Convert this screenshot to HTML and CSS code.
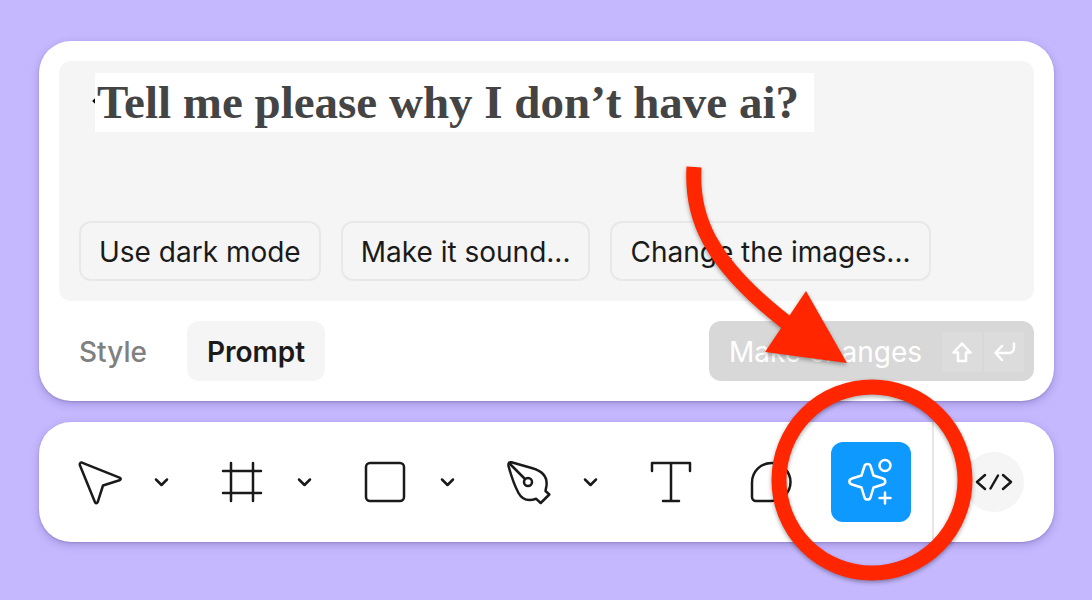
FILE: index.html
```html
<!DOCTYPE html>
<html lang="en">
<head>
    <meta charset="UTF-8">
    <meta name="viewport" content="width=device-width, initial-scale=1.0">
    <title>AI Prompt Toolbar</title>
    <link rel="stylesheet" href="styles.css">
</head>
<body>
    <main class="container">
        <section class="panel">
            <div class="prompt-box">
                <div class="prompt-row">
                    <input class="prompt-input" type="text" aria-label="Prompt" value="Tell me please why I don’t have ai?">
                </div>
                <div class="suggestions">
                    <button class="chip">Use dark mode</button>
                    <button class="chip">Make it sound...</button>
                    <button class="chip">Change the images...</button>
                </div>
            </div>
            <div class="panel-footer">
                <button class="tab">Style</button>
                <button class="tab active">Prompt</button>
                <button class="submit">
                    <span>Make changes</span>
                    <span class="keys">
                        <svg class="key" viewBox="0 0 40 40"><path d="M20 11.500l8.500 9h-4.500v8.500h-8v-8.500h-4.500z"/></svg>
                        <svg class="key" viewBox="0 0 40 40"><path d="M30 11.500v4.500a5 5 0 0 1-5 5H12M18 14l-6.500 7 6.500 7"/></svg>
                    </span>
                </button>
            </div>
        </section>

        <nav class="toolbar">
            <div class="tool-group">
                <button class="tool" aria-label="Move">
                    <svg viewBox="0 0 80 80"><path d="M23.500 20.800L60.500 35.700Q63 37 60.500 38.300L44 43.500L38.700 60.200Q37.500 62.500 36 60.200L20.800 23Q20.500 19.800 23.500 20.800z"/></svg>
                </button>
                <button class="arrow" aria-label="Move options">
                    <svg viewBox="0 0 16 16"><path d="M3 5.500l5.500 5.500 5.500-5.500"/></svg>
                </button>
            </div>
            <div class="tool-group">
                <button class="tool" aria-label="Frame">
                    <svg viewBox="0 0 80 80"><path d="M29 21v38M51 21v38M21 29h38M21 51h38"/></svg>
                </button>
                <button class="arrow" aria-label="Frame options">
                    <svg viewBox="0 0 16 16"><path d="M3 5.500l5.500 5.500 5.500-5.500"/></svg>
                </button>
            </div>
            <div class="tool-group">
                <button class="tool" aria-label="Rectangle">
                    <svg viewBox="0 0 80 80"><rect x="21" y="21" width="38" height="38" rx="4"/></svg>
                </button>
                <button class="arrow" aria-label="Shape options">
                    <svg viewBox="0 0 16 16"><path d="M3 5.500l5.500 5.500 5.500-5.500"/></svg>
                </button>
            </div>
            <div class="tool-group">
                <button class="tool" aria-label="Pen">
                    <svg viewBox="0 0 80 80">
                        <path d="M23.500 20.300L44.500 26.200C54 29 59.500 35 58.500 43.500L57.500 49L61.300 52.500L52.700 61L48.200 56.800C39 60 33.500 56.500 30.500 51C27 44.500 23.500 35 20.500 24Q20 19.500 23.500 20.300zM22 22l15 15"/>
                        <circle cx="40" cy="40" r="4"/>
                    </svg>
                </button>
                <button class="arrow" aria-label="Pen options">
                    <svg viewBox="0 0 16 16"><path d="M3 5.500l5.500 5.500 5.500-5.500"/></svg>
                </button>
            </div>
            <button class="tool" aria-label="Text">
                <svg viewBox="0 0 80 80"><path d="M21 29v-8h38v8M40 21v38M32 59h16"/></svg>
            </button>
            <button class="tool" aria-label="Comment">
                <svg viewBox="0 0 80 80"><path d="M21 55V40.500A19.500 19.500 0 0 1 40.500 21A19 19 0 0 1 40.500 59H25a4 4 0 0 1-4-4z"/></svg>
            </button>
            <button class="tool tool-ai" aria-label="AI actions">
                <svg viewBox="0 0 80 80">
                    <path d="M33.500 24C34.500 21.300 38.500 21.300 39.500 24L42.500 33.500L52 36.500C55 37.500 55 41.500 52 42.500L42.500 45.500L39.500 55.500C38.500 58.200 34.500 58.200 33.500 55.500L30.500 45.500L21 42.500C17.500 41.500 17.500 37.500 21 36.500L30.500 33.500z"/>
                    <circle cx="54" cy="23.500" r="5.500"/>
                    <path d="M54 50.500v11M48.500 56h11"/>
                </svg>
            </button>
            <div class="dev">
                <button class="dev-button" aria-label="Dev mode">
                    <svg viewBox="0 0 60 60"><path d="M21 23l-8 7 8 7M34 23.500l-7.500 13M39 23l8 7-8 7"/></svg>
                </button>
            </div>
        </nav>

        <!-- Red arrow and circle pointing at the AI button -->
        <svg class="marker" viewBox="0 0 400 430" aria-hidden="true">
            <path class="marker-line" d="M22 17C19 65 35 111 115 173"/>
            <path class="marker-head" d="M134 141L175 213L93 202z"/>
            <circle class="marker-line" cx="200" cy="330" r="93"/>
        </svg>
    </main>
</body>
</html>
```
FILE: styles.css
```css
* {
    box-sizing: border-box;
}

body {
    margin: 0;
    background-color: #c5b8ff;
    font-family: Inter, sans-serif;
    color: #1a1a1a;
}

button {
    border: none;
    padding: 0;
    background: none;
    color: inherit;
    font: inherit;
    cursor: pointer;
}

svg {
    display: block;
    fill: none;
    stroke: currentColor;
    stroke-linecap: round;
    stroke-linejoin: round;
}

.container {
    position: relative;
    display: flex;
    flex-direction: column;
    gap: 21px;
    padding: 41px 38px 57px 39px;
    font-size: 28px;
    line-height: 32px;
}

.panel,
.toolbar {
    background-color: #fff;
    border-radius: 32px;
    box-shadow: 0 3px 8px rgba(60, 40, 110, 0.25), 0 1px 2px rgba(60, 40, 110, 0.2);
}

.panel {
    padding: 20px;
}

/* Prompt area */
.prompt-box {
    display: flex;
    flex-direction: column;
    justify-content: space-between;
    min-height: 240px;
    padding: 12px 20px 20px;
    border-radius: 12px;
    background-color: #f5f5f5;
}

.prompt-row {
    position: relative;
    padding-left: 16px;
}

/* Text cursor peeking out from behind the field */
.prompt-row::before {
    content: "";
    position: absolute;
    left: 14px;
    top: 26px;
    width: 4px;
    height: 4px;
    background-color: #000;
    transform: rotate(45deg);
}

.prompt-input {
    position: relative;
    display: block;
    width: 719px;
    max-width: 100%;
    height: 59px;
    border: none;
    padding: 0 2px 2px;
    background-color: #fff;
    color: #444;
    font: bold 47px "Liberation Serif", serif;
}

.suggestions {
    display: flex;
    gap: 20px;
}

.chip {
    height: 60px;
    padding: 2px 18px 0;
    border: 2px solid #e8e8e8;
    border-radius: 12px;
}

/* Footer */
.panel-footer {
    display: flex;
    gap: 20px;
    margin-top: 20px;
}

.tab {
    height: 60px;
    padding: 2px 20px 0;
    border-radius: 12px;
    color: #808080;
    font-weight: 500;
}

.tab.active {
    background-color: #f5f5f5;
    color: #1a1a1a;
    font-weight: 600;
}

.submit {
    display: flex;
    align-items: center;
    gap: 20px;
    height: 60px;
    margin-left: auto;
    padding: 2px 10px 0 20px;
    border-radius: 12px;
    background-color: #d8d8d8;
    color: #fff;
}

.keys {
    display: flex;
    gap: 2px;
}

.key {
    width: 40px;
    height: 40px;
    background-color: #dcdcdc;
    stroke-width: 2.5;
}

/* Toolbar */
.toolbar {
    display: flex;
    align-items: center;
    gap: 20px;
    height: 120px;
    padding-left: 20px;
}

.tool-group {
    display: flex;
}

.tool {
    width: 80px;
    height: 80px;
    border-radius: 12px;
    stroke-width: 2.5;
}

.arrow {
    display: flex;
    align-items: center;
    justify-content: center;
    width: 43px;
    height: 80px;
    stroke-width: 2.5;
}

.arrow svg {
    width: 16px;
    height: 16px;
}

.tool-ai {
    background-color: #0d99ff;
    color: #fff;
}

.dev {
    display: flex;
    align-items: center;
    justify-content: center;
    width: 122px;
    height: 120px;
    margin-left: auto;
    border-left: 2px solid #e6e6e6;
}

.dev-button {
    width: 60px;
    height: 60px;
    border-radius: 50%;
    background-color: #f5f5f5;
    stroke-width: 2.5;
}

/* Marker drawn over the page */
.marker {
    position: absolute;
    top: 150px;
    right: 20px;
    width: 400px;
    height: 430px;
    overflow: visible;
    pointer-events: none;
    filter: drop-shadow(0 2px 2px rgba(0, 0, 0, 0.35));
}

.marker-line {
    stroke: #ff2600;
    stroke-width: 15;
    stroke-linecap: butt;
}

.marker-head {
    fill: #ff2600;
    stroke: none;
}
```
